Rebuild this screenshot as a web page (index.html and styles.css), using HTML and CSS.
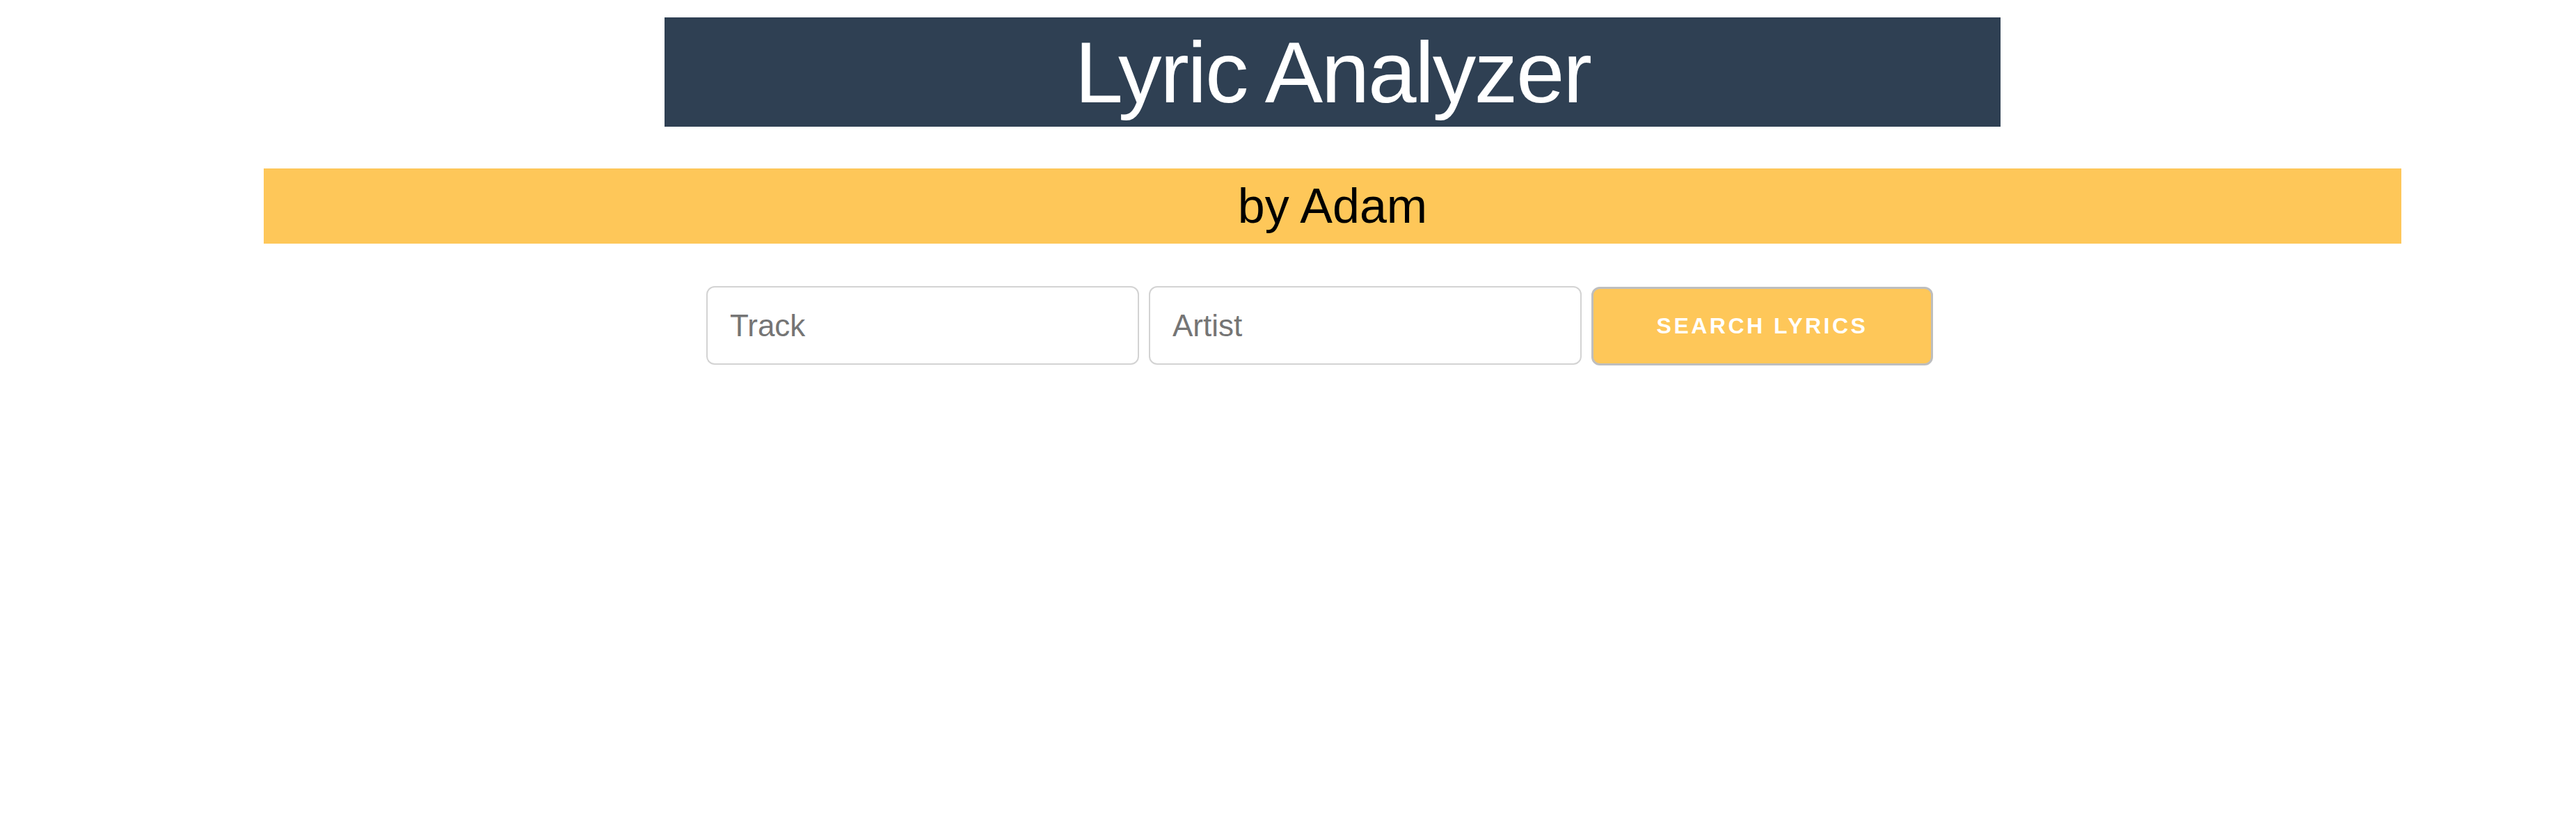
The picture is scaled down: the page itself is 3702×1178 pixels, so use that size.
FILE: index.html
```html
<!DOCTYPE html>
<html lang="en">
<head>
<meta charset="utf-8">
<title>Lyric Analyzer</title>
<link rel="stylesheet" href="styles.css">
</head>
<body>
<div class="page">
  <header class="title-bar"><h1>Lyric Analyzer</h1></header>
  <div class="byline">by Adam</div>
  <form class="search" onsubmit="return false;">
    <input class="field" type="text" placeholder="Track">
    <input class="field" type="text" placeholder="Artist">
    <button class="btn" type="submit">Search Lyrics</button>
  </form>
</div>
</body>
</html>
```
FILE: styles.css
```css
html, body {
  margin: 0;
  background: #ffffff;
}
body {
  font-family: "Liberation Sans", Arial, sans-serif;
}
.page {
  width: 3072px;
  margin-left: 379px;
  padding-top: 25px;
}
.title-bar {
  width: 1920px;
  height: 157px;
  margin-left: 576px;
  background: #2f4053;
  color: #ffffff;
  display: flex;
  align-items: center;
  justify-content: center;
}
.title-bar h1 {
  margin: 0;
  font-size: 125px;
  font-weight: normal;
  line-height: 1;
  letter-spacing: -2.3px;
}
.byline {
  margin-top: 60px;
  height: 108px;
  background: #fec759;
  color: #000000;
  font-size: 70px;
  line-height: 1;
  display: flex;
  align-items: center;
  justify-content: center;
}
.search {
  margin-top: 61px;
  margin-left: 636px;
  display: flex;
  gap: 14px;
  align-items: flex-start;
}
.field {
  box-sizing: border-box;
  width: 622px;
  height: 113px;
  border: 2px solid #d3d3d3;
  border-radius: 12px;
  padding: 0 0 0 32px;
  font-family: "Liberation Sans", Arial, sans-serif;
  font-size: 44px;
  color: #333333;
  background: #ffffff;
  outline: none;
}
.field::placeholder {
  color: #757575;
}
.btn {
  box-sizing: border-box;
  width: 491px;
  height: 113px;
  margin-top: 1px;
  border: 3px solid #bebebe;
  border-radius: 12px;
  background: #fec759;
  color: #ffffff;
  font-family: "Liberation Sans", Arial, sans-serif;
  font-weight: bold;
  font-size: 32px;
  letter-spacing: 3.5px;
  text-transform: uppercase;
  cursor: pointer;
}
```
